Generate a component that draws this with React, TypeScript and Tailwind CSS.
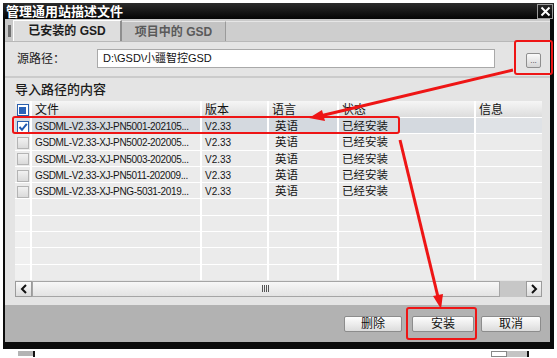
import React from "react"

const font = "font-['Liberation_Sans','Noto_Sans_CJK_SC',sans-serif]"

const rows = [
  { file: "GSDML-V2.33-XJ-PN5001-202105...", checked: true },
  { file: "GSDML-V2.33-XJ-PN5002-202005...", checked: false },
  { file: "GSDML-V2.33-XJ-PN5003-202005...", checked: false },
  { file: "GSDML-V2.33-XJ-PN5011-202009...", checked: false },
  { file: "GSDML-V2.33-XJ-PNG-5031-2019...", checked: false },
]

const cols = "grid grid-cols-[17px_170px_67px_70px_137px_66px]"

function Checkbox({ state }: { state: "on" | "off" | "partial" }) {
  if (state === "off") {
    return <div className="w-[12px] h-[12px] border border-[#b4b4b4] bg-gradient-to-b from-[#f2f2f2] to-[#dadada]" />
  }
  return (
    <div className="w-[12px] h-[12px] border border-[#2b5fad] bg-white flex items-center justify-center">
      {state === "partial" ? (
        <div className="w-[7px] h-[7px] bg-[#2a62b8]" />
      ) : (
        <svg width="10" height="10" viewBox="0 0 10 10">
          <path d="M1.5 5 L4 7.8 L8.8 1.8" fill="none" stroke="#1f58b0" strokeWidth="2" />
        </svg>
      )}
    </div>
  )
}

function Chevron({ dir }: { dir: "left" | "right" }) {
  return (
    <svg width="8" height="10" viewBox="0 0 8 10">
      <path
        d={dir === "left" ? "M6 1 L2 5 L6 9" : "M2 1 L6 5 L2 9"}
        fill="none"
        stroke="#111"
        strokeWidth="2"
      />
    </svg>
  )
}

function Btn({ label, w }: { label: string; w: string }) {
  return (
    <div
      className={`${w} h-[16px] flex items-center justify-center text-[12px] text-[#111] border border-[#8c8c8c] rounded-[2px] bg-gradient-to-b from-[#fdfdfd] to-[#dcdcdc]`}
    >
      {label}
    </div>
  )
}

export default function App() {
  return (
    <div className={`relative w-[557px] h-[358px] bg-white overflow-hidden ${font}`}>
      {/* dialog window */}
      <div className="ml-[3px] mt-[3px] w-[551px] h-[346px] bg-[#0b0b0b] flex flex-col">
        {/* title bar */}
        <div className="h-[16px] flex items-center justify-between pl-[3px] bg-gradient-to-b from-[#2c2c2c] to-[#050505]">
          <span className="text-white text-[13px] font-bold leading-none">管理通用站描述文件</span>
          <div className="w-[16px] h-[15px] mr-[1px] border border-[#9a9a9a] flex items-center justify-center">
            <svg width="11" height="11" viewBox="0 0 11 11">
              <path d="M1.5 1.5 L9.5 9.5 M9.5 1.5 L1.5 9.5" stroke="#fff" strokeWidth="2" />
            </svg>
          </div>
        </div>

        <div className="flex-1 ml-[2px] mr-[4px] mb-[7px] flex flex-col">
          {/* tabs */}
          <div className="h-[23px] bg-[#c9c9c9] flex items-end pl-[3px] border-b border-[#b8b8b8]">
            <div className="w-[3px] h-[12px] bg-[#6f6f6f] mb-[4px] mr-[2px]" />
            <div className="w-[109px] h-[21px] flex items-center justify-center bg-[#dedede] border-t border-l border-white border-r-2 border-r-[#8e8e8e] text-[12px] font-bold text-[#1c1c1c]">
              已安装的 GSD
            </div>
            <div className="w-[104px] h-[20px] flex items-center justify-center bg-[#c3c3c3] border-t border-[#e8e8e8] border-r border-r-[#9a9a9a] text-[12px] font-bold text-[#5a5a5a]">
              项目中的 GSD
            </div>
            <div className="flex-1 h-[20px] bg-[#cecece] border-t border-[#e6e6e6]" />
          </div>

          {/* content */}
          <div className="flex-1 bg-[#e4e4e4] flex flex-col">
            <div className="flex items-center h-[19px] mt-[7px] pl-[12px]">
              <span className="w-[80px] text-[12px] text-[#222]">源路径：</span>
              <div className="w-[398px] h-[19px] bg-white border border-[#a9a9a9] flex items-center pl-[5px] text-[11px] text-[#111]">
                D:\GSD\小疆智控GSD
              </div>
              <div className="ml-[31px] mt-[4px] w-[15px] h-[15px] border border-[#8e8e8e] rounded-[2px] bg-gradient-to-b from-[#fafafa] to-[#d6d6d6] flex items-end justify-center pb-[2px] text-[8px] leading-none text-[#333]">
                ...
              </div>
            </div>

            {/* import section */}
            <div className="mt-[8px] flex-1 border-t-2 border-[#cbcbcb] flex flex-col pl-[10px] pr-[8px]">
              <div className="h-[23px] flex items-center text-[13px] font-medium text-[#1b1b1b]">导入路径的内容</div>

              {/* header */}
              <div className={`${cols} h-[16px] bg-gradient-to-b from-[#f6f6f6] to-[#dddddd] text-[12px] text-[#111]`}>
                <div className="flex items-center justify-center border-r-2 border-white">
                  <Checkbox state="partial" />
                </div>
                <div className="pl-[3px] flex items-center border-r-2 border-white">文件</div>
                <div className="pl-[3px] flex items-center border-r-2 border-white">版本</div>
                <div className="pl-[3px] flex items-center border-r-2 border-white">语言</div>
                <div className="pl-[3px] flex items-center border-r-2 border-white">状态</div>
                <div className="pl-[3px] flex items-center">信息</div>
              </div>

              {/* rows */}
              {Array.from({ length: 10 }).map((_, i) => {
                const r = rows[i]
                const sel = r?.checked
                return (
                  <div
                    key={i}
                    className={`${cols} h-[16.3px] border-t border-white ${sel ? "bg-[#d4d9df]" : "bg-[#ebebeb]"} text-[#161616]`}
                  >
                    <div className={`flex items-center justify-center border-r-2 border-white ${r ? "" : "bg-[#f0f0f0]"}`}>
                      {r && <Checkbox state={r.checked ? "on" : "off"} />}
                    </div>
                    <div className="pl-[3px] flex items-center border-r-2 border-white text-[10px] tracking-[-0.35px]">
                      {r?.file}
                    </div>
                    <div className="pl-[3px] flex items-center border-r-2 border-white text-[10px]">{r && "V2.33"}</div>
                    <div className="pl-[6px] flex items-center border-r-2 border-white text-[11.5px]">{r && "英语"}</div>
                    <div className="pl-[3px] flex items-center border-r-2 border-white text-[11.5px]">{r && "已经安装"}</div>
                    <div className={sel ? "bg-[#dfe2e6]" : ""} />
                  </div>
                )
              })}

              {/* horizontal scrollbar */}
              <div className="flex h-[16px] mt-[1px] bg-[#c7c7c7]">
                <div className="w-[17px] h-[16px] border border-[#9b9b9b] bg-gradient-to-b from-[#fbfbfb] to-[#dcdcdc] flex items-center justify-center">
                  <Chevron dir="left" />
                </div>
                <div className="w-[468px] h-[16px] border border-[#a5a5a5] bg-gradient-to-b from-[#f7f7f7] to-[#e3e3e3] flex items-center justify-center">
                  <svg width="8" height="7" viewBox="0 0 8 7">
                    <path d="M0.5 0 V7 M2.5 0 V7 M4.5 0 V7 M6.5 0 V7" stroke="#555" strokeWidth="1" />
                  </svg>
                </div>
                <div className="flex-1" />
                <div className="w-[16px] h-[16px] border border-[#9b9b9b] bg-gradient-to-b from-[#fbfbfb] to-[#dcdcdc] flex items-center justify-center">
                  <Chevron dir="right" />
                </div>
              </div>
            </div>
            <div className="h-[8px]" />
          </div>

          {/* bottom buttons */}
          <div className="h-[37px] bg-[#b2b2b2] flex items-center justify-end pr-[9px]">
            <Btn label="删除" w="w-[58px]" />
            <div className="w-[10px]" />
            <Btn label="安装" w="w-[62px]" />
            <div className="w-[7px]" />
            <Btn label="取消" w="w-[60px]" />
          </div>
        </div>
      </div>

      {/* bits of the desktop under the dialog */}
      <div className="flex items-start h-[9px] pt-[2px]">
        <div className="ml-[18px] w-[15px] h-[5px] bg-[#b4b4b4]" />
        <div className="w-[2px] h-[6px] bg-[#111]" />
        <div className="ml-[456px] w-[16px] h-[6px] border border-[#888] bg-white" />
        <div className="w-[20px] h-[6px] bg-[#c4c4c4]" />
        <div className="w-[2px] h-[6px] bg-[#111]" />
      </div>

      {/* red annotations */}
      <div className="absolute left-[514px] top-[40px] w-[39px] h-[35px] border-2 border-[#ee1515] rounded-[3px]" />
      <div className="absolute left-[12px] top-[116px] w-[388px] h-[18px] border-2 border-[#ee1515] rounded-[3px]" />
      <div className="absolute left-[406px] top-[307px] w-[71px] h-[33px] border-2 border-[#ee1515] rounded-[3px]" />
      <svg className="absolute left-0 top-0 pointer-events-none" width="557" height="358">
        <line x1="513" y1="70" x2="320" y2="116" stroke="#ee1515" strokeWidth="3" />
        <polygon points="309,118 322,110 325,121" fill="#ee1515" />
        <line x1="400" y1="140" x2="438" y2="297" stroke="#ee1515" strokeWidth="3" />
        <polygon points="441,309 433,296 443,294" fill="#ee1515" />
      </svg>
    </div>
  )
}
